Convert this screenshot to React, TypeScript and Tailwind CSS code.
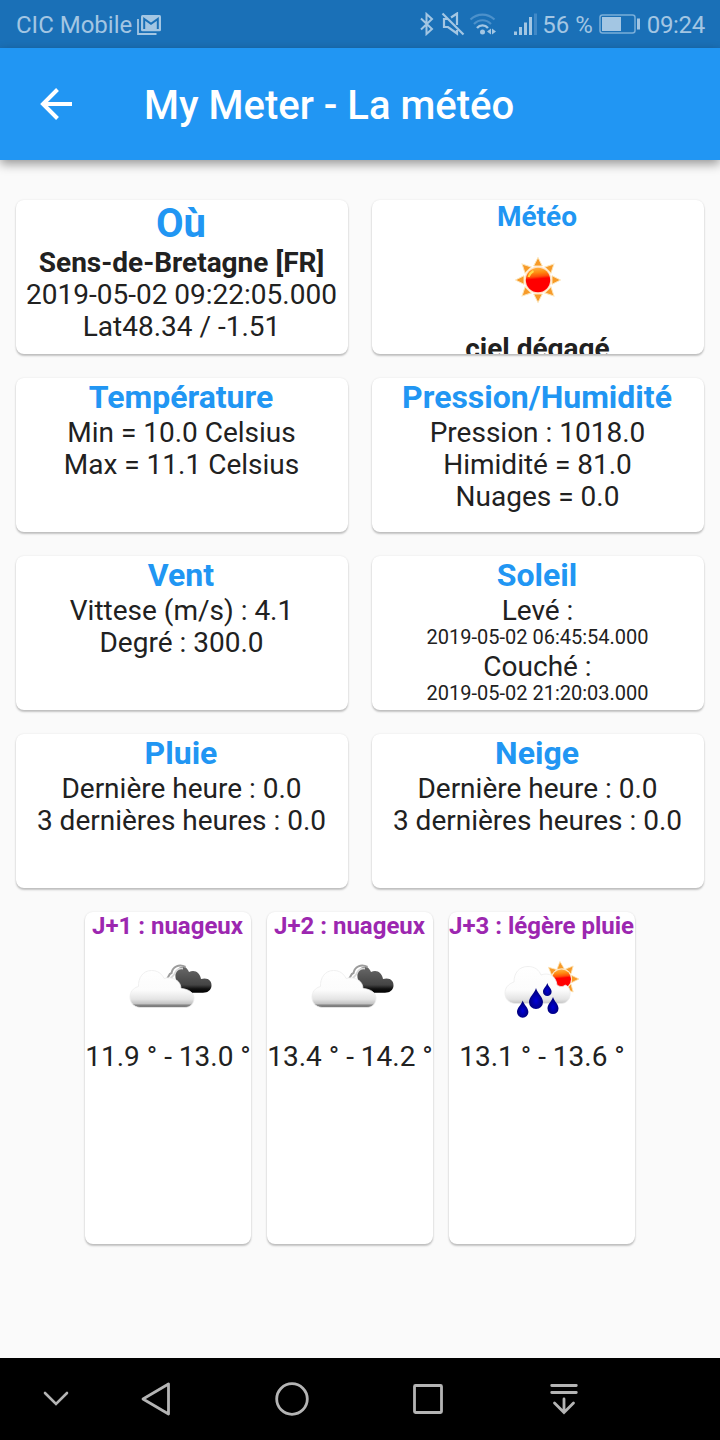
import { ReactNode } from 'react';

type CardProps = {
    title: string;
    titleClass?: string;
    children: ReactNode;
};

const SUN_RAYS = [0, 45, 90, 135, 180, 225, 270, 315];

const Gradients = () => (
    <defs>
        <linearGradient id="sun" x1="0.4" y1="0" x2="0.5" y2="1">
            <stop offset="0" stopColor="#ffb040" />
            <stop offset="0.2" stopColor="#ff8a10" />
            <stop offset="0.36" stopColor="#ff5008" />
            <stop offset="0.46" stopColor="#ff0000" />
            <stop offset="1" stopColor="#ff0000" />
        </linearGradient>
        <linearGradient
            id="cloud"
            gradientUnits="userSpaceOnUse"
            x1="0"
            y1="28"
            x2="0"
            y2="68"
        >
            <stop offset="0" stopColor="#ffffff" />
            <stop offset="0.55" stopColor="#fcfcfc" />
            <stop offset="0.78" stopColor="#e4e4e4" />
            <stop offset="0.89" stopColor="#c4c4c4" />
            <stop offset="0.93" stopColor="#848484" />
            <stop offset="1" stopColor="#747474" />
        </linearGradient>
        <linearGradient
            id="dark"
            gradientUnits="userSpaceOnUse"
            x1="0"
            y1="26"
            x2="0"
            y2="53"
        >
            <stop offset="0" stopColor="#6a6a6a" />
            <stop offset="0.7" stopColor="#444444" />
            <stop offset="0.85" stopColor="#101010" />
            <stop offset="1" stopColor="#000000" />
        </linearGradient>
        <radialGradient id="drop" cx="0.5" cy="0.6" r="0.5">
            <stop offset="0" stopColor="#0000d8" />
            <stop offset="1" stopColor="#000078" />
        </radialGradient>
    </defs>
);

const SunIcon = () => (
    <svg viewBox="0 0 100 100" className="mx-auto h-[100px] w-[100px] shrink-0">
        <Gradients />
        {SUN_RAYS.map((angle) => (
            <path
                key={angle}
                d="M50 24.5l4.3 8.5h-8.6z"
                fill="#f79a28"
                stroke="#fde3b4"
                strokeWidth="1"
                transform={`rotate(${angle} 50 47)`}
            />
        ))}
        <circle cx="50" cy="47" r="13.4" fill="#ffe0c4" />
        <circle cx="50" cy="47" r="12.2" fill="url(#sun)" />
        <path
            d="M40.5 44a10.5 10.5 0 0 1 5-6"
            fill="none"
            stroke="#ffd84a"
            strokeWidth="2"
        />
    </svg>
);

const CloudsIcon = () => (
    <svg viewBox="0 0 100 100" className="mx-auto h-[100px] w-[100px] shrink-0">
        <Gradients />
        <path
            d="M58 40C57 36 57 33 59 30C61 27 64 26 67 27C69 28 70 30 71 32C77 29 82 33 83 39C90 37 94 41 93.5 46C93 50 90 52.700 85 52.700H68L60 46z"
            fill="url(#dark)"
        />
        <path
            d="M48.500 39C51 38 50 34 53.500 33C54.500 27 61 23.500 67.500 27"
            fill="none"
            stroke="#9c9c9c"
            strokeWidth="2"
        />
        <path
            d="M52 40C53 36 55.500 37 57 33C59 29 61 28 65 28.500"
            fill="none"
            stroke="#d8d8d8"
            strokeWidth="1.800"
        />
        <path
            d="M22 67.500C15 67 12 62 12 57C12 52 15 48 20.500 46.500C20 38 25 30.500 33.500 30.500C40 30.500 44 34 46 38.500C55 36 63 41 63 48.500C71 49 76 53 76 58C76 64 72 67.500 67 67.500z"
            fill="url(#cloud)"
            stroke="#ececec"
            strokeWidth="0.800"
        />
    </svg>
);

const DROPS = [
    'M30.7 60.5C32 65 36.4 67.5 36.4 72A5.7 5.7 0 0 1 25 72C25 67.5 29.4 65 30.7 60.5z',
    'M44 48C45.5 53.5 51 57 51 62A7 7 0 0 1 37 62C37 57 42.5 53.5 44 48z',
    'M55.3 43C56.3 46.5 59.6 48.5 59.6 51.7A4.3 4.3 0 0 1 51 51.7C51 48.5 54.3 46.5 55.3 43z',
    'M61 57C62.3 61.5 66.5 64 66.5 68.5A5.5 5.5 0 0 1 55.5 68.5C55.5 64 59.7 61.5 61 57z',
];

const RainIcon = () => (
    <svg viewBox="0 0 100 100" className="mx-auto h-[100px] w-[100px] shrink-0">
        <Gradients />
        {[-5, 42, 90, 138, -48].map((angle) => (
            <path
                key={angle}
                d="M69.500 21.500l3.700 7.500h-7.400z"
                fill="#f79a28"
                stroke="#fde3b4"
                strokeWidth="0.800"
                transform={`rotate(${angle} 69.500 39)`}
            />
        ))}
        <circle cx="69.500" cy="39" r="10.500" fill="#ffe4c0" />
        <circle cx="69.500" cy="39" r="9.500" fill="url(#sun)" />
        <path
            d="M23 63.500C16 63 13 58 13 53C13 48 16 44 22 42C22 33 27 26.500 36 26.500C43 26.500 47 30 49 35C57 32 64 36 65 45C68 47 71 47 73 45C77 46 78.500 50 78 55C77.500 60 74 63.500 69 63.500z"
            fill="url(#cloud)"
            stroke="#ececec"
            strokeWidth="0.800"
        />
        {DROPS.map((d) => (
            <path key={d} d={d} fill="url(#drop)" />
        ))}
    </svg>
);

const StatusBar = () => (
    <div className="flex h-12 items-center bg-[#1a70b7] pl-4 pr-[15px] text-[24px] leading-[48px] text-[#a3c6e3]">
        <span className="pt-px">CIC Mobile</span>
        <svg viewBox="0 0 24 20" className="ml-[5px] mt-px h-5 w-6" fill="none">
            <path d="M1 4v15h18.500" stroke="currentColor" strokeWidth="1.8" />
            <rect
                x="4"
                y="0"
                width="20"
                height="16.300"
                rx="1.500"
                fill="currentColor"
            />
            <path
                d="M7.200 14V4L14 8.800 20.800 4V14"
                stroke="#1a70b7"
                strokeWidth="2"
            />
        </svg>
        <div className="ml-auto flex items-center">
            <svg viewBox="0 0 16 24" className="mr-px h-6 w-4" fill="none">
                <path
                    d="M2 6.500l11 10.500-5.500 5V2l5.500 5L2 17.500"
                    stroke="currentColor"
                    strokeWidth="2"
                />
            </svg>
            <svg viewBox="0 0 24 24" className="ml-[5px] h-6 w-6" fill="none">
                <path
                    d="M1.500 1.500l21 21M6.500 7H3v8h4l9 6.500V18M10 5.500l6-4V13"
                    stroke="currentColor"
                    strokeWidth="2.200"
                />
            </svg>
            <svg viewBox="0 0 28 24" className="ml-[4px] h-6 w-7" fill="none">
                <path
                    d="M1.500 7.500c7-6.500 17-6.500 24 0M5 12c5-5 12-5 17 0"
                    stroke="#4c91cb"
                    strokeWidth="2.200"
                />
                <path
                    d="M8 16c3-3.500 8-3.500 11 0"
                    stroke="currentColor"
                    strokeWidth="2.400"
                />
                <circle cx="13.500" cy="20" r="2.500" fill="currentColor" />
                <path d="M18 19.500l4-3v6zM23 16.500v6l4-3z" fill="currentColor" />
            </svg>
            <svg viewBox="0 0 24 24" className="ml-[17px] h-6 w-6">
                <path
                    d="M0 19.500h3V23H0zM5 15h3v8H5zM10 10.500h3V23h-3zM15 5h3v18h-3z"
                    fill="currentColor"
                />
                <path d="M20 1.500h3V23h-3z" fill="#4189c7" />
            </svg>
            <span className="ml-[4px] pt-px">56 %</span>
            <svg viewBox="0 0 42 20" className="ml-[6px] h-5 w-[42px]">
                <rect
                    x="1"
                    y="1"
                    width="35"
                    height="18"
                    rx="2.500"
                    fill="none"
                    stroke="#7aaed9"
                    strokeWidth="1.500"
                />
                <path d="M3 3h19v14H3zM38 4.500h3v11h-3z" fill="currentColor" />
            </svg>
            <span className="ml-[6px] pt-px tracking-[-0.3px]">09:24</span>
        </div>
    </div>
);

const AppBar = () => (
    <header className="relative flex h-28 items-center bg-[#2196f3] pl-10 text-white shadow-[0_4px_10px_rgba(0,0,0,0.4)]">
        <svg viewBox="0 0 32 32" className="h-8 w-8" fill="none">
            <path
                d="M32 16H4M17.500 1.500L3 16l14.500 14.500"
                stroke="currentColor"
                strokeWidth="4"
            />
        </svg>
        <h1 className="ml-[72px] pt-1 text-[40px] font-medium leading-[48px]">
            My Meter - La météo
        </h1>
    </header>
);

const Card = ({
    title,
    titleClass = 'text-[32px] leading-[38px] pb-px',
    children,
}: CardProps) => (
    <section className="flex h-[154px] flex-col overflow-hidden whitespace-nowrap rounded-lg bg-white pr-px text-center text-[28px] leading-8 shadow-[0_2px_2px_rgba(0,0,0,0.22),0_0_2px_rgba(0,0,0,0.1)]">
        <h2 className={`shrink-0 pr-px font-bold text-[#2196f3] ${titleClass}`}>
            {title}
        </h2>
        {children}
    </section>
);

const FORECASTS = [
    { title: 'J+1 : nuageux', temp: '11.9 ° - 13.0 °', width: 'w-[166px]', Icon: CloudsIcon },
    { title: 'J+2 : nuageux', temp: '13.4 ° - 14.2 °', width: 'w-[166px]', Icon: CloudsIcon },
    { title: 'J+3 : légère pluie', temp: '13.1 ° - 13.6 °', width: 'w-[186px]', Icon: RainIcon },
];

const NavBar = () => (
    <nav className="flex h-[82px] items-center bg-black pl-6 text-[#b4b4b4]">
        <svg viewBox="-32 -20 64 40" className="h-10 w-16" fill="none">
            <path
                d="M-11-6L0 5 11-6"
                stroke="currentColor"
                strokeWidth="2.600"
                strokeLinecap="round"
            />
        </svg>
        <svg viewBox="-68 -20 136 40" className="h-10 w-[136px]" fill="none">
            <path
                d="M12.500-15v30L-13 0z"
                stroke="currentColor"
                strokeWidth="2.800"
                strokeLinejoin="round"
            />
        </svg>
        <svg viewBox="-68 -20 136 40" className="h-10 w-[136px]" fill="none">
            <circle r="15.300" stroke="currentColor" strokeWidth="2.800" />
        </svg>
        <svg viewBox="-68 -20 136 40" className="h-10 w-[136px]" fill="none">
            <rect
                x="-13.500"
                y="-13.500"
                width="27"
                height="27"
                rx="1"
                stroke="currentColor"
                strokeWidth="2.800"
            />
        </svg>
        <svg viewBox="-68 -20 136 40" className="h-10 w-[136px]" fill="none">
            <path
                d="M-12.300-13.500h24.600M-12.300-6.500h24.600M0 0v13M-9.500 4L0 13.500 9.500 4"
                stroke="currentColor"
                strokeWidth="2.800"
                strokeLinecap="round"
            />
        </svg>
    </nav>
);

const App = () => {
    return (
        <div className="flex h-[1440px] w-[720px] flex-col overflow-hidden bg-[#fafafa] font-[Roboto,sans-serif] text-[#212121]">
            <StatusBar />
            <AppBar />
            <main className="flex-1 px-4 pt-10">
                <div className="grid grid-cols-2 gap-6">
                    <Card title="Où" titleClass="text-[40px] leading-[46px] pt-px">
                        <p className="font-bold">Sens-de-Bretagne [FR]</p>
                        <p>2019-05-02 09:22:05.000</p>
                        <p>Lat48.34 / -1.51</p>
                    </Card>
                    <Card title="Météo" titleClass="text-[28px] leading-[33px]">
                        <SunIcon />
                        <p className="font-bold">ciel dégagé</p>
                    </Card>
                    <Card title="Température">
                        <p>Min = 10.0 Celsius</p>
                        <p>Max = 11.1 Celsius</p>
                    </Card>
                    <Card title="Pression/Humidité">
                        <p>Pression : 1018.0</p>
                        <p>Himidité = 81.0</p>
                        <p>Nuages = 0.0</p>
                    </Card>
                    <Card title="Vent">
                        <p>Vittese (m/s) : 4.1</p>
                        <p>Degré : 300.0</p>
                    </Card>
                    <Card title="Soleil">
                        <p>Levé :</p>
                        <p className="pb-1 text-[20px] leading-5">2019-05-02 06:45:54.000</p>
                        <p>Couché :</p>
                        <p className="pb-1 text-[20px] leading-5">2019-05-02 21:20:03.000</p>
                    </Card>
                    <Card title="Pluie">
                        <p>Dernière heure : 0.0</p>
                        <p>3 dernières heures : 0.0</p>
                    </Card>
                    <Card title="Neige">
                        <p>Dernière heure : 0.0</p>
                        <p>3 dernières heures : 0.0</p>
                    </Card>
                </div>
                <div className="mt-6 flex justify-center gap-4">
                    {FORECASTS.map(({ title, temp, width, Icon }) => (
                        <section
                            key={title}
                            className={`flex h-[332px] flex-col items-center whitespace-nowrap rounded-lg bg-white shadow-[0_2px_2px_rgba(0,0,0,0.22),0_0_2px_rgba(0,0,0,0.1)] ${width}`}
                        >
                            <h3 className="pr-px text-[24px] font-bold leading-7 text-[#9c27b0]">
                                {title}
                            </h3>
                            <Icon />
                            <p className="pt-px text-[28px] leading-8">{temp}</p>
                        </section>
                    ))}
                </div>
            </main>
            <NavBar />
        </div>
    );
};

export default App;
